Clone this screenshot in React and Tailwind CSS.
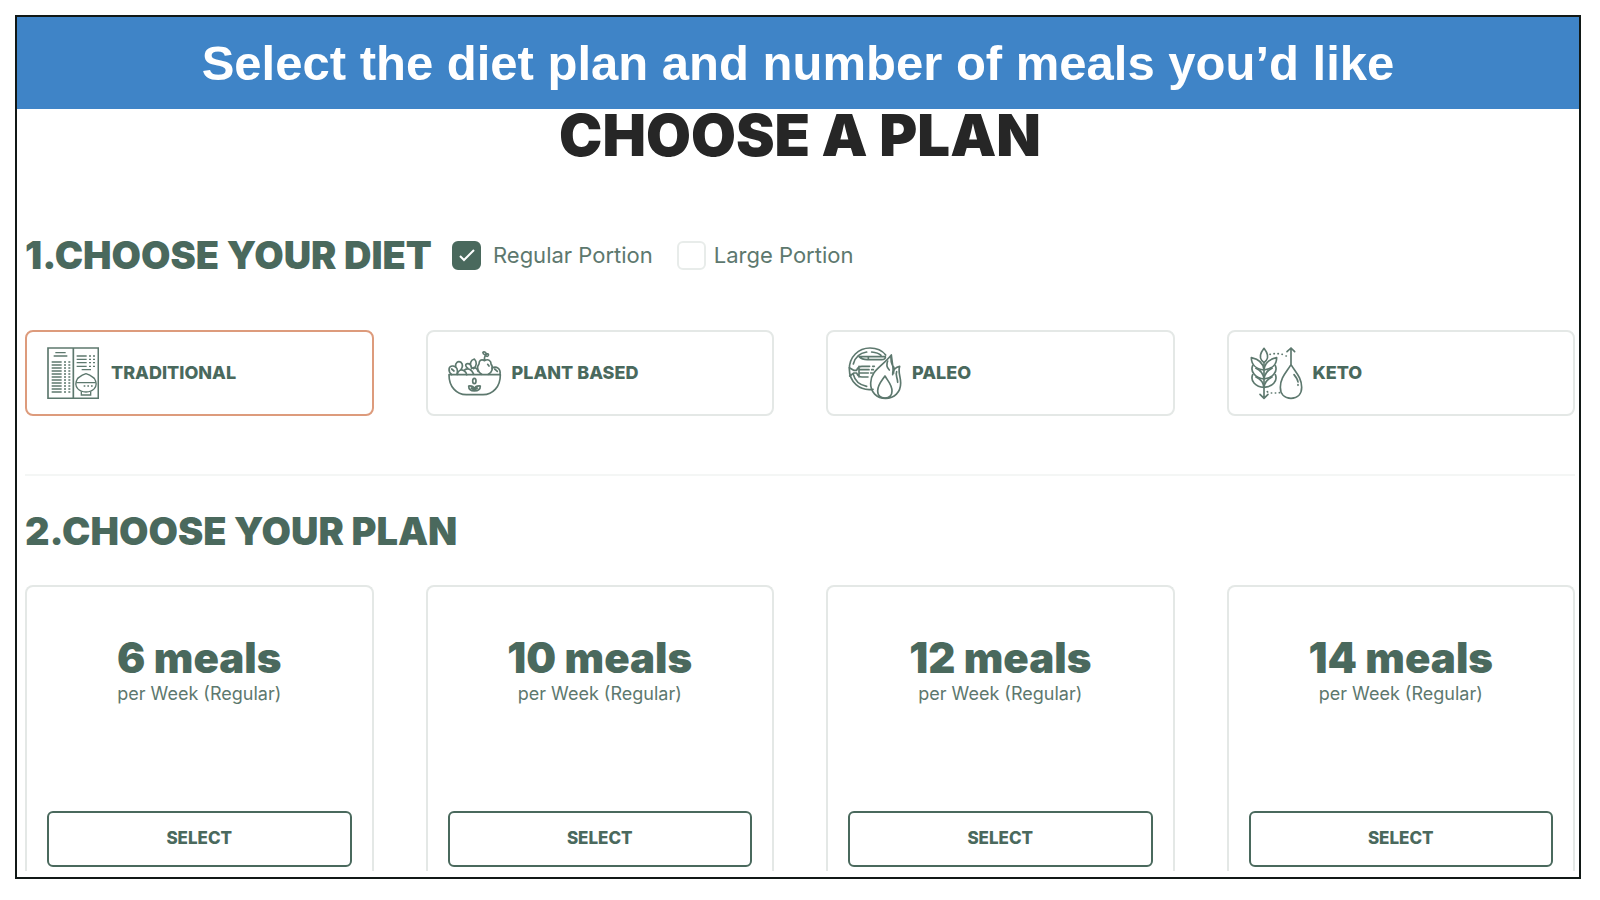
import React, { useState } from 'react';

function MenuIcon() {
  const rows = [45, 54, 63, 72, 81, 90, 99, 108, 117, 126, 135];
  return (
    <svg viewBox="0 0 156 156" className="size-[52px] shrink-0" fill="none" stroke="#5d786e" strokeWidth="4" aria-hidden="true">
      <path d="M3 3H154V154H3ZM79 3V154" strokeWidth="5" />
      <path d="M25 17H56M20 27H61" />
      {rows.map(y => (
        <path key={y} d={`M14 ${y}H44M51 ${y}H57M64 ${y}H70`} />
      ))}
      <path d="M89 27H119M89 37H119M89 47H119M89 58H119M126 27H132M138 27H144M126 37H132M138 37H144M126 47H132M138 47H144M126 58H132M138 58H144M104 68H132" />
      <path d="M92 94C97 91 101 85 117 80C133 85 137 91 142 94C149 105 149 116 142 125C136 132 128 135 117 135C106 135 98 132 92 125C85 116 85 105 92 94Z" />
      <path d="M88 107H146M103 134V144H131V134M110 117H115M121 117H126M132 117H137" />
    </svg>
  );
}

function BowlIcon() {
  return (
    <svg viewBox="0 0 156 156" className="size-[52px] shrink-0 overflow-visible" fill="none" stroke="#5d786e" strokeWidth="5" strokeLinecap="round" strokeLinejoin="round" aria-hidden="true">
      <path d="M3 83H157C157 119 135 143 105 143H55C25 143 3 119 3 83Z" />
      <path d="M11 83C-1 72 1 56 15 57C27 58 31 70 27 82" />
      <path d="M23 60C21 47 30 41 39 46C45 52 43 62 38 69M28 82C30 70 39 66 48 71C53 74 56 79 56 83M11 66L18 72" />
      <path d="M50 69C58 62 71 65 77 82M60 64C51 58 51 50 59 50C66 50 70 56 71 64C64 51 67 39 79 36C87 44 87 57 77 65" />
      <path d="M71 64C80 58 88 65 90 73" />
      <path d="M110 41C98 34 93 43 93 51C84 61 91 77 101 82M110 41C121 34 130 42 129 51C138 63 130 78 121 82M110 41C109 34 110 28 112 24M112 24C101 19 104 13 110 15C115 17 115 21 112 24C117 19 123 20 121 25C119 29 115 29 112 24M119 52L123 57" />
      <path d="M132 63C145 55 159 66 156 82M140 66L148 73" />
      <ellipse cx="79" cy="102" rx="5" ry="8" />
      <path d="M62 117C72 116 78 120 79 128C80 120 86 116 97 117C97 127 91 132 79 132C67 132 62 127 62 117ZM70 123L79 130L88 123" />
    </svg>
  );
}

function PaleoIcon() {
  return (
    <svg viewBox="0 0 156 156" className="size-[52px] shrink-0 overflow-visible" fill="none" stroke="#5d786e" strokeWidth="5" strokeLinecap="round" strokeLinejoin="round" aria-hidden="true">
      <path d="M75 127C34 133 4 104 4 66C4 30 31 3 66 3C86 3 103 11 113 24" />
      <path d="M16 51C21 31 36 18 56 15M71 15C83 16 93 19 99 25M16 82C21 103 36 114 56 118" />
      <path d="M33 29H112C114 34 108 38 101 38H58C47 38 38 34 33 29ZM61 38V29" />
      <path d="M4 62L17 70H26C29 60 34 58 42 58H65M5 87L18 78H26C29 87 34 90 42 90H60M33 68H63M33 78H61M33 58V90M74 58H79M71 68H76M68 78H73" />
      <path d="M130 24C127 39 130 51 137 61C138 68 136 73 134 78M137 78C135 69 143 60 155 58C149 74 158 88 158 108C158 136 139 154 113 154C86 154 67 135 68 108C69 70 101 60 130 24Z" />
      <path d="M119 42C115 51 117 62 124 69M137 61L134 83M146 74C141 85 149 92 149 106" />
      <path d="M111 87C101 102 89 113 89 132C89 146 98 153 111 153C124 153 132 145 132 132C132 113 120 103 111 87Z" />
    </svg>
  );
}

function KetoIcon() {
  return (
    <svg viewBox="0 0 156 156" className="size-[52px] shrink-0 overflow-visible" fill="none" stroke="#5d786e" strokeWidth="5" strokeLinecap="round" strokeLinejoin="round" aria-hidden="true">
      <path d="M45 4C35 17 30 30 38 40L45 47L52 40C60 30 55 17 45 4ZM45 47V153M33 142L45 154L57 142" />
      <path d="M7 32C7 52 21 66 45 69C43 48 28 36 7 32ZM83 32C83 52 69 66 45 69C47 48 62 36 83 32Z" />
      <path d="M11 56C3 74 20 94 45 96C43 80 34 70 21 64M79 56C87 74 70 94 45 96C47 80 56 70 69 64" />
      <path d="M11 83C3 102 20 120 45 121C43 105 34 96 21 90M79 83C87 102 70 120 45 121C47 105 56 96 69 90" />
      <path d="M126 53C112 76 94 92 94 121C94 142 107 154 126 154C145 154 158 142 158 121C158 92 140 76 126 53ZM126 53V4M114 14L126 3L137 14" />
      <path d="M135 83C141 90 146 97 147 105M147 113V115" />
      <path d="M63 22H64M75 20H76M87 20H88M99 22H100M111 27H112M55 134L56 135M67 138H68M79 138H80M91 137H92" />
    </svg>
  );
}

const diets = [
  { name: 'TRADITIONAL', Icon: MenuIcon },
  { name: 'PLANT BASED', Icon: BowlIcon },
  { name: 'PALEO', Icon: PaleoIcon },
  { name: 'KETO', Icon: KetoIcon },
];

const plans = [6, 10, 12, 14];

function PortionCheckbox({ id, label, checked, onChange, className }) {
  return (
    <div className={`flex items-center ${className}`}>
      <span className="relative flex size-[29px]">
        <input
          id={id}
          type="checkbox"
          checked={checked}
          onChange={onChange}
          className="size-full appearance-none rounded-md border-2 border-[#e8ecea] bg-white checked:border-[#4a695d] checked:bg-[#4a695d]"
        />
        {checked && (
          <svg viewBox="0 0 29 29" className="pointer-events-none absolute inset-0" fill="none" stroke="white" strokeWidth="2" aria-hidden="true">
            <path d="M8 15L12 19L22 9" />
          </svg>
        )}
      </span>
      <label htmlFor={id} className="text-[22px] leading-7 text-[#5d786e]">{label}</label>
    </div>
  );
}

function App() {
  const [portion, setPortion] = useState('Regular');
  const [diet, setDiet] = useState('TRADITIONAL');

  return (
    <div className="bg-white pt-[15px] pr-[19px] pb-5 pl-[15px] font-['Inter',sans-serif] text-[#4a695d]">
      <main className="border-2 border-[#111816]">
        <div className="flex h-[92px] items-center justify-center bg-[#3f84c7] pt-[2px] font-['Liberation_Sans',sans-serif] text-[49px] font-bold text-white">
          Select the diet plan and number of meals you’d like
        </div>

        <div className="pr-1 pb-[6px] pl-2">
          <h1 className="text-center text-[58px] leading-[52px] font-black text-[#262626]">CHOOSE A PLAN</h1>

          <div className="mt-[70px] flex h-12 items-center">
            <h2 className="text-[38px] leading-[48px] font-black">1.CHOOSE YOUR DIET</h2>
            <PortionCheckbox
              id="regular"
              label="Regular Portion"
              checked={portion === 'Regular'}
              onChange={() => setPortion('Regular')}
              className="ml-5 gap-3"
            />
            <PortionCheckbox
              id="large"
              label="Large Portion"
              checked={portion === 'Large'}
              onChange={() => setPortion('Large')}
              className="ml-6 gap-2"
            />
          </div>

          <div className="mt-[51px] grid grid-cols-4 gap-[52px]">
            {diets.map(({ name, Icon }) => (
              <button
                key={name}
                type="button"
                onClick={() => setDiet(name)}
                className={`flex h-[86px] items-center gap-3 rounded-lg border-2 px-5 text-lg font-extrabold ${diet === name ? 'border-[#dd9b7c]' : 'border-[#e4e8e6]'}`}
              >
                <Icon />
                {name}
              </button>
            ))}
          </div>

          <hr className="mt-[58px] border-t-2 border-[#f4f6f5]" />

          <h2 className="mt-[31px] text-[38px] leading-[48px] font-black">2.CHOOSE YOUR PLAN</h2>

          <div className="mt-[30px] grid grid-cols-4 gap-[52px]">
            {plans.map(meals => (
              <section key={meals} className="rounded-t-lg border-2 border-b-0 border-[#e4e8e6] px-5 pt-[47px] pb-1 text-center">
                <h3 className="text-[42px] leading-[48px] font-black">{meals} meals</h3>
                <p className="text-lg leading-6 text-[#5d786e]">per Week (Regular)</p>
                <button
                  type="button"
                  className="mt-[105px] h-14 w-full rounded-md border-2 border-[#4a695d] text-[17px] font-extrabold"
                >
                  SELECT
                </button>
              </section>
            ))}
          </div>
        </div>
      </main>
    </div>
  );
}

export default App;
